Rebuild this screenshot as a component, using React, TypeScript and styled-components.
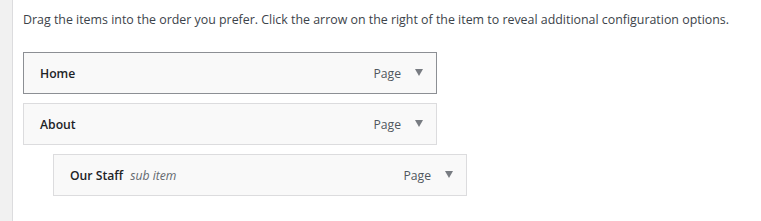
import styled, { createGlobalStyle } from 'styled-components'

const Global = createGlobalStyle`
  body {
    margin: 0;
    background: #fff;
    font-family: "Open Sans", "Noto Sans", sans-serif;
    color: #3c434a;
  }
`

const Page = styled.div`
  display: flex;
  min-height: 221px;
`

const SideStrip = styled.div`
  width: 12px;
  background: #f1f1f1;
  border-right: 1px solid #dcdcde;
  flex-shrink: 0;
`

const Content = styled.div`
  padding: 11px 10px 0 10px;
  flex: 1;
`

const Intro = styled.p`
  margin: 0 0 23px;
  font-size: 12.4px;
  line-height: 18px;
  color: #3c434a;
`

const ItemList = styled.ul`
  list-style: none;
  margin: 0;
  padding: 0;
  display: flex;
  flex-direction: column;
  gap: 9px;
`

const Item = styled.li<{ $depth: number; $active?: boolean }>`
  box-sizing: border-box;
  width: 414px;
  height: 42px;
  margin-left: ${p => p.$depth * 30}px;
  display: flex;
  align-items: center;
  padding: 0 13px 0 16px;
  background: #f9f9f9;
  border: 1px solid ${p => (p.$active ? '#8c8f94' : '#dcdcde')};
`

const Title = styled.span`
  font-size: 12.2px;
  font-weight: 600;
  color: #1d2327;
`

const SubLabel = styled.span`
  margin-left: 7px;
  font-size: 12.2px;
  font-style: italic;
  color: #646970;
`

const Spacer = styled.span`
  flex: 1;
`

const TypeLabel = styled.span`
  font-size: 12.2px;
  color: #50575e;
  margin-right: 14px;
`

const Arrow = styled.span`
  width: 0;
  height: 0;
  border-left: 4.5px solid transparent;
  border-right: 4.5px solid transparent;
  border-top: 7px solid #787c82;
  margin-top: -2px;
`

const items = [
  { title: 'Home', depth: 0, active: true },
  { title: 'About', depth: 0 },
  { title: 'Our Staff', depth: 1, sub: 'sub item' },
]

export default function App() {
  return (
    <>
      <Global />
      <Page>
        <SideStrip />
        <Content>
          <Intro>
            Drag the items into the order you prefer. Click the arrow on the right of the item to reveal additional configuration options.
          </Intro>
          <ItemList>
            {items.map(item => (
              <Item key={item.title} $depth={item.depth} $active={item.active}>
                <Title>{item.title}</Title>
                {item.sub && <SubLabel>{item.sub}</SubLabel>}
                <Spacer />
                <TypeLabel>Page</TypeLabel>
                <Arrow />
              </Item>
            ))}
          </ItemList>
        </Content>
      </Page>
    </>
  )
}
